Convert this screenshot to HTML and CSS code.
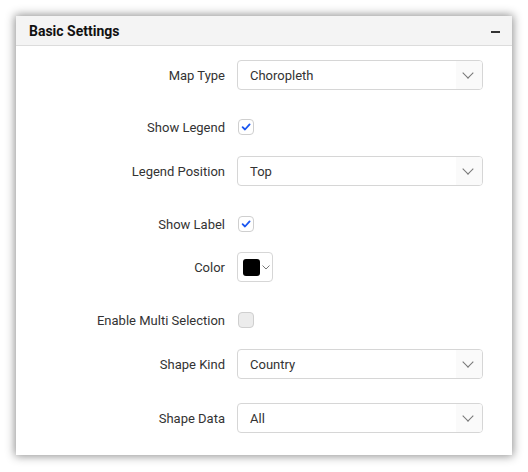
FILE: index.html
```html
<!DOCTYPE html>
<html>
<head>
<meta charset="utf-8">
<link rel="stylesheet" href="styles.css">
</head>
<body>
<div class="panel">
  <div class="header">
    <span class="title">Basic Settings</span>
    <span class="collapse"></span>
  </div>
  <div class="body">
    <div class="row r-drop mb22">
      <label>Map Type</label>
      <div class="select"><span>Choropleth</span><i class="chev"></i></div>
    </div>
    <div class="row r-check mb14">
      <label>Show Legend</label>
      <span class="cb checked"><svg viewBox="0 0 14 14" width="14" height="14"><path d="M3.6 7.2 L6 9.5 L10.6 4.4" fill="none" stroke="#1a56f0" stroke-width="1.8" stroke-linecap="round" stroke-linejoin="round"/></svg></span>
    </div>
    <div class="row r-drop mb23">
      <label>Legend Position</label>
      <div class="select"><span>Top</span><i class="chev"></i></div>
    </div>
    <div class="row r-check mb13">
      <label>Show Label</label>
      <span class="cb checked"><svg viewBox="0 0 14 14" width="14" height="14"><path d="M3.6 7.2 L6 9.5 L10.6 4.4" fill="none" stroke="#1a56f0" stroke-width="1.8" stroke-linecap="round" stroke-linejoin="round"/></svg></span>
    </div>
    <div class="row r-drop mb23">
      <label>Color</label>
      <div class="colorpick"><span class="swatch"></span><svg class="mini" viewBox="0 0 8 5" width="8" height="5"><path d="M0.5 0.5 L4 4 L7.5 0.5" fill="none" stroke="#777" stroke-width="1"/></svg></div>
    </div>
    <div class="row r-check mb14">
      <label>Enable Multi Selection</label>
      <span class="cb"></span>
    </div>
    <div class="row r-drop mb24">
      <label>Shape Kind</label>
      <div class="select"><span>Country</span><i class="chev"></i></div>
    </div>
    <div class="row r-drop">
      <label>Shape Data</label>
      <div class="select"><span>All</span><i class="chev"></i></div>
    </div>
  </div>
</div>
</body>
</html>
```
FILE: styles.css
```css
html, body {
  margin: 0;
  padding: 0;
  background: #fff;
}
body {
  font-family: Roboto, "Liberation Sans", sans-serif;
  color: #333;
}
.panel {
  margin: 16px;
  width: 496px;
  height: 439px;
  background: #fff;
  box-shadow: 0 0 9px 1px rgba(0,0,0,0.45);
  box-sizing: border-box;
}
.header {
  height: 30px;
  background: #f4f4f4;
  border-bottom: 1px solid #dcdcdc;
  box-sizing: border-box;
  display: flex;
  align-items: center;
  justify-content: space-between;
  padding: 0 12px 0 13px;
}
.title {
  font-size: 14px;
  font-weight: 700;
  color: #111;
  padding-top: 1px;
}
.collapse {
  width: 9px;
  height: 2px;
  background: #333;
  margin-top: 2px;
}
.body {
  padding-top: 14px;
  display: flex;
  flex-direction: column;
}
.row {
  display: grid;
  grid-template-columns: 209px 246px;
  column-gap: 12px;
  align-items: center;
  height: 30px;
}
.row label {
  text-align: right;
  font-size: 13px;
  color: #333;
}
.r-check label {
  position: relative;
  top: 0;
}
.mb13 { margin-bottom: 13px; }
.mb14 { margin-bottom: 14px; }
.mb22 { margin-bottom: 22px; }
.mb23 { margin-bottom: 23px; }
.mb24 { margin-bottom: 24px; }
.select {
  height: 30px;
  border: 1px solid #d6d6d6;
  border-radius: 4px;
  box-sizing: border-box;
  display: flex;
  align-items: center;
  justify-content: space-between;
  font-size: 13px;
  color: #333;
  overflow: hidden;
}
.select span {
  padding-left: 12px;
  padding-top: 1px;
}
.chev {
  width: 26px;
  height: 28px;
  background: #fafafa;
  position: relative;
}
.chev::after {
  content: "";
  position: absolute;
  left: 8px;
  top: 8px;
  width: 7px;
  height: 7px;
  border-right: 1px solid #777;
  border-bottom: 1px solid #777;
  transform: rotate(45deg);
}
.cb {
  width: 14px;
  height: 14px;
  border: 1px solid #cfcfcf;
  border-radius: 4px;
  background: #ececec;
  display: inline-flex;
  align-items: center;
  justify-content: center;
  margin-left: 1px;
}
.cb.checked {
  background: #fff;
}
.cb svg { display: block; }
.colorpick {
  width: 36px;
  height: 30px;
  border: 1px solid #d6d6d6;
  border-radius: 4px;
  box-sizing: border-box;
  display: flex;
  align-items: center;
  padding-left: 5px;
  gap: 2px;
}
.swatch {
  width: 17px;
  height: 17px;
  background: #000;
  border-radius: 3px;
}
.mini { display: block; margin-top: 1px; }
```
